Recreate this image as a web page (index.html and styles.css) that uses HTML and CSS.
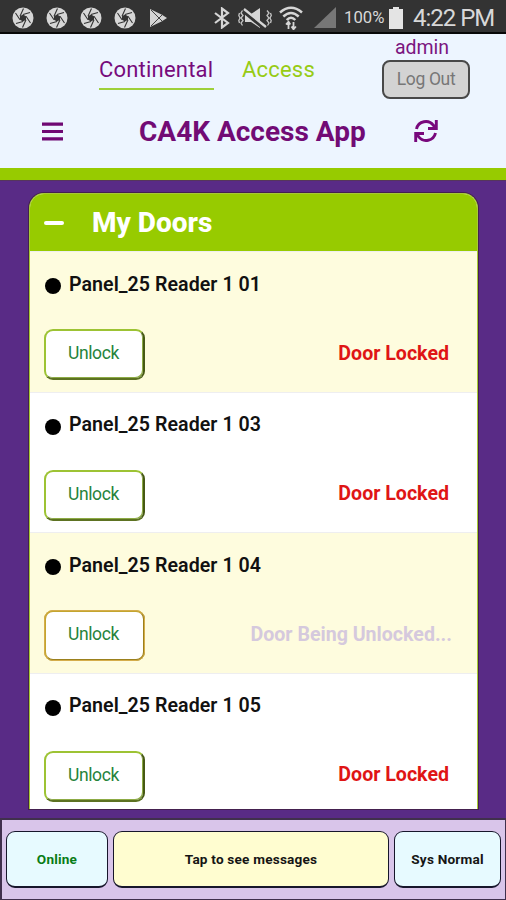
FILE: index.html
```html
<!DOCTYPE html>
<html lang="en">
<head>
<meta charset="utf-8">
<title>CA4K Access App</title>
<link rel="stylesheet" href="styles.css">
</head>
<body>
<svg class="defs" aria-hidden="true">
  <symbol id="shutter" viewBox="0 0 22 22">
    <circle cx="11" cy="11" r="10.5" fill="#d6d6d6"/>
    <path d="M11 7.500 14 9.200v3.600l-3 1.700-3-1.700V9.200z" fill="#333"/>
    <path d="M11 7.500 18 5.500M14 9.200 18.500 16M14 12.800 10.500 20.500M11 14.500 4 16.500M8 12.800 3.500 6M8 9.200 11.500 1.500" stroke="#333" stroke-width="1.100" fill="none"/>
  </symbol>
</svg>
<div class="status">
  <div class="status-left">
    <svg class="shutter"><use href="#shutter"/></svg>
    <svg class="shutter"><use href="#shutter"/></svg>
    <svg class="shutter"><use href="#shutter"/></svg>
    <svg class="shutter"><use href="#shutter"/></svg>
    <svg class="play" viewBox="0 0 19 20"><path d="M1 1v18l11.500-5.500L18 10l-5.500-3.500z" fill="#d4d4d4"/><path d="M2 2 13 13M2 18 13 7" stroke="#444" stroke-width="1"/></svg>
  </div>
  <div class="status-right">
    <svg class="bt" viewBox="0 0 16 22"><path d="M1 6 14 16 8 20.500V1.500L14 6 1 16" fill="none" stroke="#d6d6d6" stroke-width="2.200"/></svg>
    <svg class="mute" viewBox="0 0 34 20"><path d="M7 6h6l9-6v20l-9-6H7z" fill="#d6d6d6"/><path d="M5 3 27 21" stroke="#333" stroke-width="3.500"/><path d="M6 1 28 19" stroke="#d6d6d6" stroke-width="2.300"/><path d="M4.500 2.500 3 5l2 2.500-2 2.500 2 2.500-2 2.500 1.500 2.500M1.500 5 .8 7.500 2 10 .8 12.500l.7 2.500M29 2.500 31 5l-2 2.500 2 2.500-2 2.500 2 2.500-1.500 2.500M32.500 5l.8 2.500L32 10l1.200 2.500-.7 2.500" fill="none" stroke="#c4c4c4" stroke-width="1.300"/></svg>
    <svg class="wifi" viewBox="0 0 24 24"><path d="M1 6.500Q12-3 23 6.500M4.300 10.500Q12 3.500 19.700 10.500M7.700 14Q12 9.500 16.300 14" fill="none" stroke="#d6d6d6" stroke-width="2.500"/><path d="M9.500 23v-7M14.500 16v7M7 18.500 9.500 15.800l1.800 2.700M12.500 20.500l2 2.800 2.400-2.800" fill="none" stroke="#d6d6d6" stroke-width="1.800"/></svg>
    <svg class="signal" viewBox="0 0 22 21"><path d="M22 0v21H0z" fill="#777"/></svg>
    <span class="percent">100%</span>
    <svg class="battery" viewBox="0 0 14 22"><path d="M4 0h6v2h4v20H0V2h4z" fill="#e4e4e4"/></svg>
    <span class="clock">4:22 PM</span>
  </div>
</div>
<header class="header">
  <div class="brand-row">
    <a class="brand active">Continental</a>
    <a class="brand">Access</a>
    <div class="user"><span class="user-name">admin</span><button class="logout">Log Out</button></div>
  </div>
  <div class="title-row">
    <svg class="menu" viewBox="0 0 20 18"><path d="M0 2h20M0 9h20M0 16h20" stroke="#6f0873" stroke-width="3"/></svg>
    <h1 class="title"><span>CA4K Access App</span></h1>
    <svg class="refresh" viewBox="0 0 24 24"><path d="M2.500 10A9.500 9.500 0 0 1 19.500 6.500L22 9M21.500 14A9.500 9.500 0 0 1 4.500 17.500L2 15M14 9.500H22.300V1M10 14.500H1.700V23" fill="none" stroke="#78087c" stroke-width="2.900"/></svg>
  </div>
</header>
<main class="main">
  <section class="card">
    <div class="card-head"><i class="minus"></i><h2 class="card-title">My Doors</h2></div>
    <div class="door tint">
      <div class="door-name"><i class="dot"></i><span>Panel_25 Reader 1 01</span></div>
      <div class="door-row"><button class="unlock">Unlock</button><span class="state">Door Locked</span></div>
    </div>
    <div class="door">
      <div class="door-name"><i class="dot"></i><span>Panel_25 Reader 1 03</span></div>
      <div class="door-row"><button class="unlock">Unlock</button><span class="state">Door Locked</span></div>
    </div>
    <div class="door tint">
      <div class="door-name"><i class="dot"></i><span>Panel_25 Reader 1 04</span></div>
      <div class="door-row"><button class="unlock focused">Unlock</button><span class="state pending">Door Being Unlocked...</span></div>
    </div>
    <div class="door">
      <div class="door-name"><i class="dot"></i><span>Panel_25 Reader 1 05</span></div>
      <div class="door-row"><button class="unlock">Unlock</button><span class="state">Door Locked</span></div>
    </div>
  </section>
</main>
<footer class="footer">
  <button class="foot online">Online</button>
  <button class="foot messages">Tap to see messages</button>
  <button class="foot">Sys Normal</button>
</footer>
</body>
</html>
```

FILE: styles.css
```css
* { box-sizing: border-box; }
body {
  margin: 0;
  width: 506px;
  height: 900px;
  overflow: hidden;
  display: flex;
  flex-direction: column;
  font-family: Roboto, "Liberation Sans", sans-serif;
  background: #592b86;
}
button { font-family: inherit; padding: 0; margin: 0; }
svg { display: block; flex: none; }
h1, h2 { margin: 0; }
.defs { position: absolute; width: 0; height: 0; }

.status {
  height: 34px;
  flex: none;
  background: #333;
  border-bottom: 2px solid #080808;
  display: flex;
  justify-content: space-between;
  align-items: center;
  padding: 3px 12px 0;
  color: #d8d8d8;
}
.status-left, .status-right { display: flex; align-items: center; }
.status-left { gap: 12px; }
.shutter { width: 22px; height: 22px; }
.play { width: 19px; height: 20px; margin-left: 1px; }
.bt { width: 16px; height: 22px; margin-right: 8px; }
.mute { width: 34px; height: 20px; margin-right: 7px; }
.wifi { width: 24px; height: 24px; margin-right: 11px; }
.signal { width: 22px; height: 21px; margin-right: 8px; }
.percent { font-size: 16.700px; width: 40px; white-space: nowrap; }
.battery { width: 14px; height: 22px; margin: 0 10px 0 5px; }
.clock { font-size: 24px; letter-spacing: -1px; width: 81px; white-space: nowrap; line-height: 24px; }

.header {
  height: 146px;
  flex: none;
  background: #edf5ff;
  border-bottom: 12px solid #97cb00;
  box-shadow: 0 1px 0 #55365c;
  z-index: 1;
}
.brand-row { display: flex; height: 66px; padding-left: 99px; }
.brand {
  height: 56px;
  padding-top: 22px;
  margin-right: 28px;
  font-size: 22px;
  line-height: 28px;
  color: #97cb14;
  letter-spacing: .2px;
}
.brand.active { color: #770b7c; width: 115px; border-bottom: 2px solid #9ed03a; }
.user { margin-left: auto; margin-right: 36px; width: 88px; display: flex; flex-direction: column; align-items: center; }
.user-name { font-size: 19.500px; line-height: 24px; padding-top: 2px; color: #7b1580; margin-right: 8px; }
.logout {
  width: 88px;
  height: 39px;
  border: 2px solid #484848;
  border-radius: 8px;
  background: #d3d3d3;
  color: #777;
  font-size: 17.500px;
  letter-spacing: -.35px;
  padding-bottom: 1px;
}
.title-row { display: flex; align-items: center; height: 64px; padding: 0 68px 2px 42px; }
.menu { width: 21px; height: 19px; }
.title { flex: 1; padding-left: 76px; padding-top: 2px; font-size: 28px; line-height: 32px; font-weight: 700; color: #720b75; white-space: nowrap; }
.refresh { width: 24px; height: 24px; }

.main { flex: 1; min-height: 0; padding: 13px 28px 9px 29px; }
.card {
  height: 616px;
  overflow: hidden;
  border: 1px solid #a7c936;
  border-bottom: 0;
  border-radius: 15px 15px 0 0;
  background: #fff;
  box-shadow: 0 0 0 1px #44204f;
}
.card-head { height: 57px; background: #97cb00; display: flex; align-items: center; padding-left: 14px; }
.minus { width: 20px; height: 4px; border-radius: 2px; background: #fff; }
.card-title { margin-left: 28px; color: #fff; font-size: 28px; font-weight: 800; line-height: 32px; margin-top: 1px; }
.door { height: 140.670px; padding: 19px 25px 0 14px; border-top: 1px solid #eeeef0; }
.tint { background: #fefcde; }
.door-name { display: flex; align-items: center; height: 26px; font-size: 19.600px; font-weight: 600; letter-spacing: .05px; color: #111; }
.dot { width: 16px; height: 16px; border-radius: 50%; background: #000; margin: 4px 8px 0 1px; }
.door-row { display: flex; align-items: center; justify-content: space-between; margin-top: 32px; }
.unlock {
  width: 101px;
  height: 51px;
  border: 2px solid #9dc334;
  border-right-color: #465914;
  border-bottom-color: #5d7222;
  box-shadow: inset -1px -1px 0 #8dab45;
  border-radius: 9px;
  background: #fff;
  color: #26833b;
  font-size: 17.500px;
  letter-spacing: -.4px;
  padding: 0 2px 3px 0;
}
.focused { border-color: #c3a52f #9b801d #9b801d #c3a52f; box-shadow: none; outline: 1px solid #d5ad4b; outline-offset: -1px; }
.state { font-size: 19.600px; font-weight: 700; color: #df1515; margin: -3px 3px 0 0; }
.pending { color: #d5c9dd; margin-right: 0; }

.footer {
  height: 82px;
  flex: none;
  display: flex;
  gap: 5px;
  padding: 11px 4px 12px 4px;
  background: #d9c5ea;
  border: 1px solid #40304d;
  border-top-width: 2px;
  border-left-width: 2px;
}
.foot {
  width: 107px;
  height: 57px;
  border: 1px solid #17162b;
  border-bottom-width: 2px;
  border-radius: 9px;
  background: #e7faff;
  color: #151515;
  font-size: 13.600px;
  letter-spacing: .2px;
  font-weight: 700;
}
.online { width: 102px; color: #087c16; }
.messages { flex: 1; background: #fffdd0; }
```
